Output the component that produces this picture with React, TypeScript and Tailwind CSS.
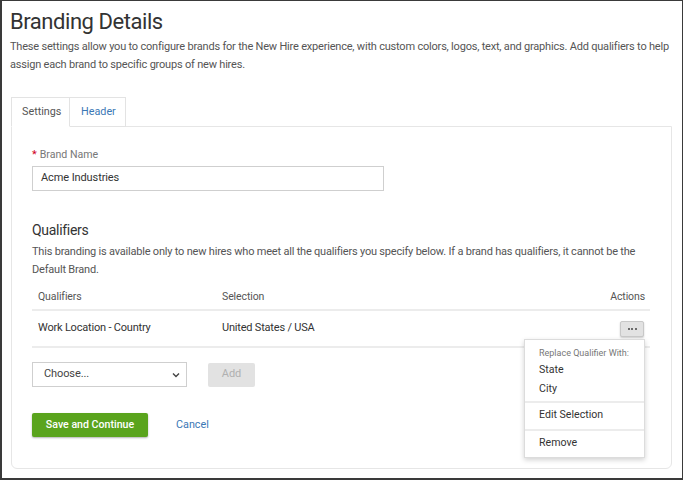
import React from "react";

export default function App() {
  return (
    <div
      className="w-[683px] h-[480px] bg-white border-t border-r border-l-2 border-b-2 border-[#3a3a3a] overflow-hidden relative text-[#333]"
      style={{ fontFamily: "Roboto, 'Liberation Sans', sans-serif" }}
    >
      <div className="pl-[8px]">
        <h1 className="text-[22px] tracking-[-0.45px] leading-[28px] mt-[7px] text-[#333] font-normal">Branding Details</h1>
        <p className="text-[11px] tracking-[-0.2px] leading-[18px] mt-[2px] text-[#555] w-[670px]">
          These settings allow you to configure brands for the New Hire experience, with custom colors, logos, text, and graphics. Add qualifiers to help assign each brand to specific groups of new hires.
        </p>

        <div className="mt-[23px] flex relative z-10 -mb-px pl-[1px]">
          <div className="h-[30px] w-[59px] pl-[10px] flex items-center border border-[#e3e3e3] border-b-white bg-white text-[10.8px] text-[#555]">
            Settings
          </div>
          <div className="h-[30px] w-[56px] pl-[11px] flex items-center border border-l-0 border-[#e3e3e3] bg-white text-[10.8px] text-[#3b78b5]">
            Header
          </div>
        </div>

        <div className="ml-[1px] w-[661px] h-[343px] border border-[#e6e6e6] rounded-b-[6px] px-[20px] pt-[20px]">
          <div className="text-[10.6px] leading-[16px] text-[#777] flex items-center">
            <span className="text-[#d0021b] mr-[3px] text-[11px]">*</span>
            Brand Name
          </div>
          <div className="mt-[3px] w-[352px] h-[25px] border border-[#cfcfcf] flex items-center pl-[8px] text-[11px] tracking-[-0.1px] text-[#333]">
            Acme Industries
          </div>

          <h2 className="mt-[29px] text-[14px] tracking-[-0.3px] leading-[20px] text-[#333] font-normal">Qualifiers</h2>
          <p className="mt-[3px] text-[11px] tracking-[-0.2px] leading-[18px] text-[#555] w-[620px]">
            This branding is available only to new hires who meet all the qualifiers you specify below. If a brand has qualifiers, it cannot be the Default Brand.
          </p>

          <div className="mt-[5px] w-[618px]">
            <div className="flex items-center h-[27px] border-b-2 border-[#ececec] text-[10.5px] tracking-[-0.1px] text-[#555]">
              <div className="w-[190px] pl-[6px]">Qualifiers</div>
              <div className="flex-1">Selection</div>
              <div className="pr-[5px]">Actions</div>
            </div>
            <div className="flex items-center h-[37px] border-b-2 border-[#ececec] text-[11px] tracking-[-0.2px] text-[#333]">
              <div className="w-[190px] pl-[6px]">Work Location - Country</div>
              <div className="flex-1">United States / USA</div>
              <div className="pr-[6px]">
                <div className="w-[24px] h-[16px] rounded-[2px] bg-[#e2e2e2] border border-[#c8c8c8] shadow-[0_1px_2px_rgba(0,0,0,0.2)] flex items-center justify-center gap-[1.5px]">
                  <span className="w-[2px] h-[2px] rounded-full bg-[#444]" />
                  <span className="w-[2px] h-[2px] rounded-full bg-[#444]" />
                  <span className="w-[2px] h-[2px] rounded-full bg-[#444]" />
                </div>
              </div>
            </div>
          </div>

          <div className="mt-[14px] flex items-center">
            <div className="w-[155px] h-[25px] border border-[#cfcfcf] flex items-center justify-between pl-[11px] pr-[6px] text-[11px] tracking-[-0.1px] text-[#444]">
              <span>Choose...</span>
              <svg width="8" height="6" viewBox="0 0 8 6">
                <path d="M1 1.5 L4 4.5 L7 1.5" fill="none" stroke="#444" strokeWidth="1.4" />
              </svg>
            </div>
            <div className="ml-[21px] w-[47px] h-[24px] rounded-[2px] bg-[#e2e2e2] text-[#b0b0b0] text-[11px] flex items-center justify-center">
              Add
            </div>
          </div>

          <div className="mt-[26px] flex items-center">
            <div className="w-[116px] h-[24px] rounded-[2px] bg-[#5aa41d] text-white text-[10.6px] font-medium flex items-center justify-center shadow-[0_1px_2px_rgba(0,0,0,0.3)]">
              Save and Continue
            </div>
            <div className="ml-[28px] text-[10.8px] text-[#3b78b5]">Cancel</div>
          </div>
        </div>
      </div>

      <div className="absolute left-[522px] top-[338px] w-[121px] h-[119px] bg-white border border-[#dcdcdc] shadow-[0_2px_5px_rgba(0,0,0,0.18)] text-[10.6px] text-[#333]">
        <div className="pl-[14px] pt-[7px] text-[9px] leading-[12px] text-[#777] whitespace-nowrap">Replace Qualifier With:</div>
        <div className="pl-[14px] mt-[2px] leading-[18px]">State</div>
        <div className="pl-[14px] mt-[1px] leading-[18px]">City</div>
        <div className="mt-[3px] border-t-2 border-[#ececec]" />
        <div className="pl-[14px] mt-[3px] leading-[18px]">Edit Selection</div>
        <div className="mt-[5px] border-t-2 border-[#ececec]" />
        <div className="pl-[14px] mt-[3px] leading-[18px]">Remove</div>
      </div>
    </div>
  );
}
